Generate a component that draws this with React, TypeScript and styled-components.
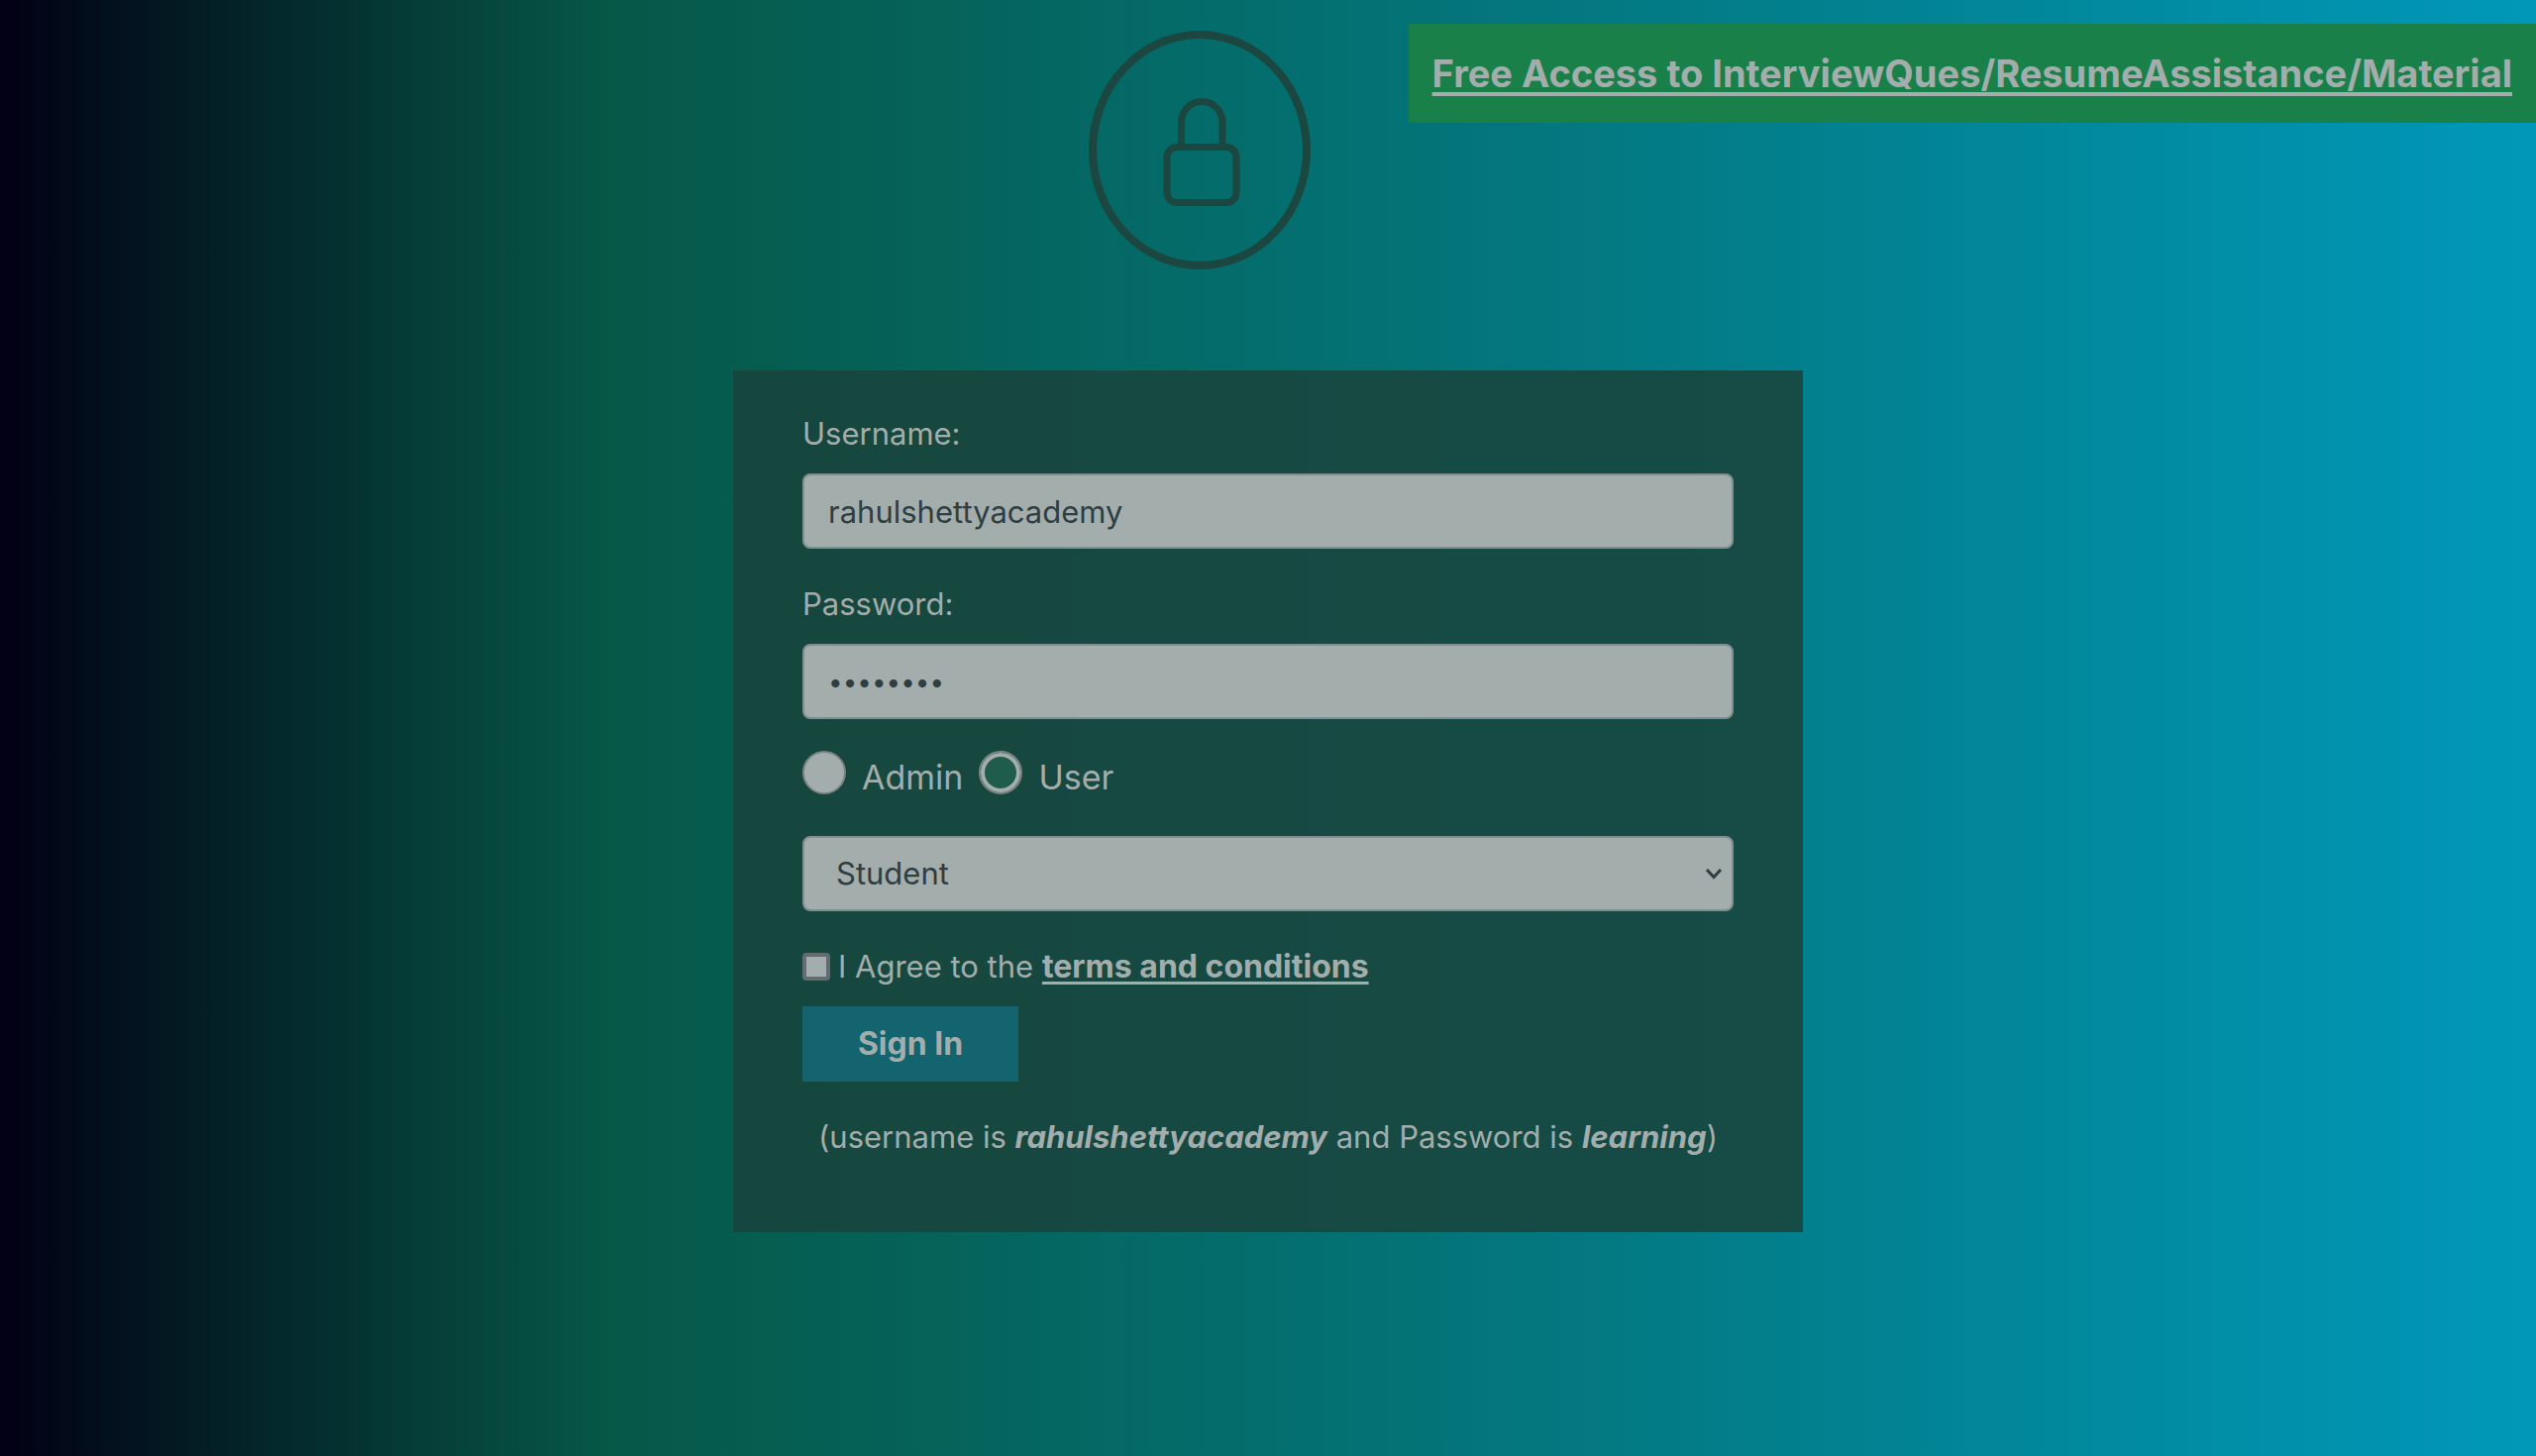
import React from "react";
import styled, { createGlobalStyle } from "styled-components";

const light = "#a3adab";
const dark = "#2e3e42";
const edge = "#808e90";

const GlobalStyle = createGlobalStyle`
  * { box-sizing: border-box; }
  html, body { margin: 0; min-height: 100vh; }
  body {
    font-family: Inter, "Liberation Sans", sans-serif;
    font-size: 31px;
    line-height: 48px;
    color: ${light};
    background: linear-gradient(90deg, #020014 0%, #065847 24%, #0098b9 100%);
    background-attachment: fixed;
  }
`;

const Page = styled.main`
  display: flex;
  flex-direction: column;
  min-height: 100vh;
`;

const Header = styled.header`
  display: flex;
  justify-content: space-between;
  align-items: flex-start;
  padding-top: 24px;
  margin-bottom: 94px;
`;

const LockIcon = styled.svg`
  flex: none;
  width: 232px;
  height: 256px;
  margin-left: 43%;
  overflow: visible;
  fill: none;
  stroke: #1b4740;
`;

const Banner = styled.a`
  flex: none;
  padding: 20px 24px;
  background: #1a804a;
  color: ${light};
  font-size: 38px;
  line-height: 60px;
  font-weight: 700;
  text-decoration-thickness: 4px;
  text-underline-offset: 5px;
  white-space: nowrap;
`;

const Card = styled.form`
  display: flex;
  flex-direction: column;
  gap: 32px;
  width: 100%;
  max-width: 1080px;
  margin: 0 auto;
  padding: 40px 70px 72px;
  background: rgba(25, 68, 60, 0.88);
`;

const Field = styled.div`
  display: flex;
  flex-direction: column;
  gap: 16px;
`;

const TextInput = styled.input`
  width: 100%;
  height: 76px;
  padding: 0 24px;
  border: 2px solid ${edge};
  border-radius: 8px;
  background: ${light};
  color: ${dark};
  font: inherit;
  &[type="password"] { font-size: 26px; }
`;

const Options = styled.div`
  display: flex;
  gap: 16px;
  font-size: 34px;
  line-height: 54px;
`;

const Option = styled.label`
  display: flex;
  align-items: flex-start;
  gap: 16px;
`;

const Radio = styled.input`
  appearance: none;
  width: 44px;
  height: 44px;
  margin: 0;
  border: 2px solid #7c8483;
  border-radius: 50%;
  background: ${light};
  &:checked {
    background: #1f5c4b;
    box-shadow: inset 0 0 0 4px ${light};
  }
`;

const SelectBox = styled.div`
  display: grid;
  grid-template-columns: 1fr;
  align-items: center;
  & > * { grid-area: 1 / 1; }
`;

const Select = styled.select`
  appearance: none;
  width: 100%;
  height: 76px;
  padding: 0 32px;
  border: 2px solid ${edge};
  border-radius: 8px;
  background: ${light};
  color: ${dark};
  font: inherit;
`;

const Chevron = styled.svg`
  justify-self: end;
  width: 20px;
  height: 14px;
  margin-right: 10px;
  fill: none;
  stroke: ${dark};
  pointer-events: none;
`;

const Actions = styled.div`
  display: flex;
  flex-direction: column;
  align-items: flex-start;
  gap: 16px;
`;

const Agreement = styled.div`
  display: flex;
  align-items: center;
  gap: 8px;
`;

const Checkbox = styled.input`
  appearance: none;
  width: 28px;
  height: 28px;
  margin: 0;
  border: 4px solid #646b71;
  border-radius: 4px;
  background: ${light};
`;

const TermsLink = styled.a`
  color: ${light};
  font-size: 32px;
  font-weight: 700;
  text-decoration-thickness: 3px;
  text-underline-offset: 4px;
`;

const SignIn = styled.button`
  min-width: 218px;
  height: 76px;
  padding: 0 48px;
  border: 0;
  background: #13646f;
  color: ${light};
  font: inherit;
  font-size: 32px;
  font-weight: 700;
`;

const Hint = styled.p`
  margin: 0;
  text-align: center;
  white-space: nowrap;
`;

const Term = styled.em`
  font-weight: 700;
`;

export default function App() {
  return (
    <Page>
      <GlobalStyle />
      <Header>
        <LockIcon viewBox="0 0 232 256" aria-hidden="true">
          <ellipse cx="110" cy="127.5" rx="108" ry="116.5" strokeWidth="8" />
          <rect x="77" y="124.5" width="70" height="56" rx="10" strokeWidth="7" />
          <path d="M91.5 124.5V99.5a20.75 21 0 0 1 41.5 0v25" strokeWidth="7" />
        </LockIcon>
        <Banner href="#">Free Access to InterviewQues/ResumeAssistance/Material</Banner>
      </Header>
      <Card onSubmit={(e) => e.preventDefault()}>
        <Field>
          <label htmlFor="username">Username:</label>
          <TextInput id="username" type="text" defaultValue="rahulshettyacademy" />
        </Field>
        <Field>
          <label htmlFor="password">Password:</label>
          <TextInput id="password" type="password" defaultValue="learning" />
        </Field>
        <Options>
          <Option>
            <Radio type="radio" name="role" value="admin" />
            Admin
          </Option>
          <Option>
            <Radio type="radio" name="role" value="user" defaultChecked />
            User
          </Option>
        </Options>
        <SelectBox>
          <Select aria-label="Role" defaultValue="Student">
            <option>Student</option>
            <option>Teacher</option>
            <option>Consultant</option>
          </Select>
          <Chevron viewBox="0 0 20 14" aria-hidden="true">
            <path d="M3 3l7 7.500 7-7.500" strokeWidth="3" />
          </Chevron>
        </SelectBox>
        <Actions>
          <Agreement>
            <Checkbox id="terms" type="checkbox" />
            <span>
              <label htmlFor="terms">I Agree to the </label>
              <TermsLink href="#">terms and conditions</TermsLink>
            </span>
          </Agreement>
          <SignIn type="submit">Sign In</SignIn>
        </Actions>
        <Hint>
          (username is <Term>rahulshettyacademy</Term> and Password is <Term>learning</Term>)
        </Hint>
      </Card>
    </Page>
  );
}
